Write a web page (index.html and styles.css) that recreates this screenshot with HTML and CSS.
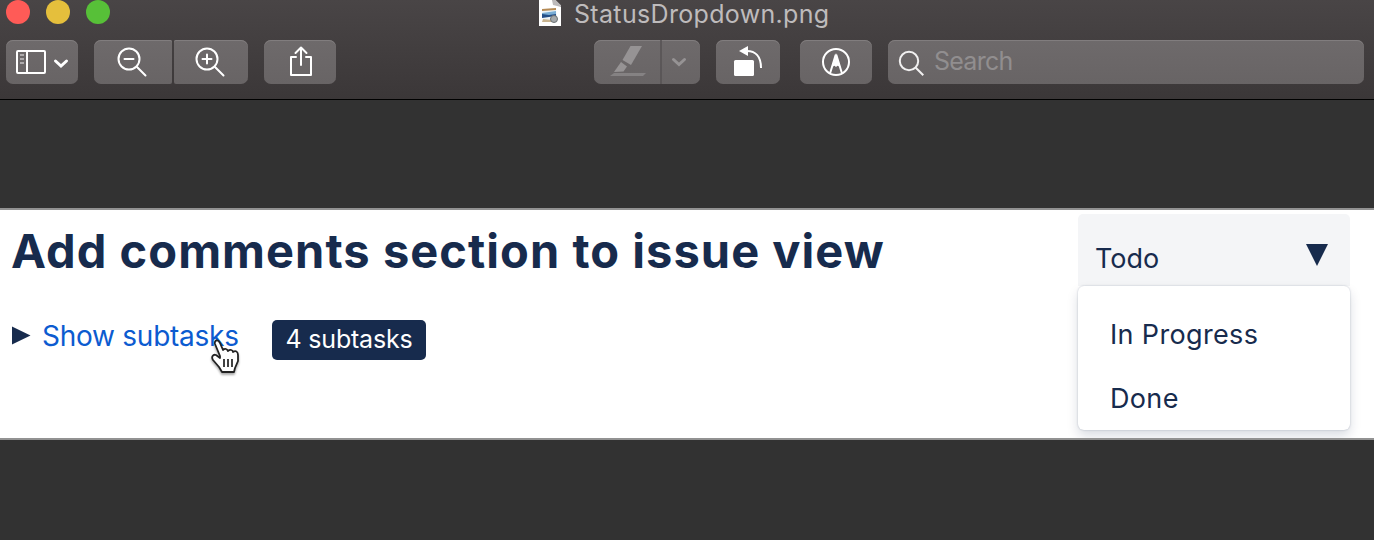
FILE: index.html
```html
<!DOCTYPE html>
<html lang="en">
<head>
<meta charset="utf-8">
<title>StatusDropdown.png</title>
<link rel="stylesheet" href="styles.css">
</head>
<body>
<div class="window">
  <header class="chrome">
    <div class="titlebar">
      <div class="lights"><span class="light red"></span><span class="light yellow"></span><span class="light green"></span></div>
      <div class="filename">
        <svg class="file-icon" width="24" height="28" viewBox="0 0 24 28">
          <path d="M1 0h13l9 7v19H1z" fill="#fff"/>
          <path d="M14 0l1 5 8 2V5l-5-5z" fill="#bcbabb"/>
          <path d="M18 0h5v5z" fill="#4a4647"/>
          <path d="M4 9l14-1 1 12-14 2z" fill="#edf3f6"/>
          <path d="M4 9l14-1v2L4 11z" fill="#b58a54"/>
          <path d="M4 13l14-2v4L4 17z" fill="#79add5"/>
          <path d="M4 14l7 1 7-1v2L4 18z" fill="#244e87"/>
          <path d="M5 19l9 1v2H4z" fill="#c9b48f"/>
          <circle cx="16" cy="19" r="3.500" fill="#a5a9ab" stroke="#6b7174"/>
        </svg>
        <span>StatusDropdown.png</span>
      </div>
    </div>
    <div class="toolbar">
      <button class="btn sidebar-btn">
        <svg width="72" height="44" viewBox="0 0 72 44" fill="none" stroke="#fff" stroke-width="2">
          <rect x="11" y="11" width="28" height="22" rx="1"/><path d="M21 11v22"/>
          <path d="M14 15h4M14 19h4M14 23h4" stroke="#c5c2c3" stroke-width="1.6"/>
          <path d="M49.500 21l5.500 5 5.500-5" stroke-width="3" stroke-linecap="round"/>
        </svg>
      </button>
      <div class="zoom-group">
        <button class="btn zoom-out">
          <svg width="78" height="44" viewBox="0 0 78 44" fill="none" stroke="#fff" stroke-width="2" stroke-linecap="round"><circle cx="35" cy="19" r="10.500"/><path d="M43 27l8.500 8.500M30.500 19h9"/></svg>
        </button>
        <button class="btn zoom-in">
          <svg width="74" height="44" viewBox="0 0 74 44" fill="none" stroke="#fff" stroke-width="2" stroke-linecap="round"><circle cx="33" cy="19" r="10.500"/><path d="M41 27l8.500 8.500M28.500 19h9M33 14.500v9"/></svg>
        </button>
      </div>
      <button class="btn share">
        <svg width="72" height="44" viewBox="0 0 72 44" fill="none" stroke="#fff" stroke-width="2" stroke-linecap="round" stroke-linejoin="round"><path d="M32 17h-5v18h20V17h-5M37 25V7.500M31.500 13L37 7.500l5.500 5.500"/></svg>
      </button>
      <button class="btn marker">
        <svg width="106" height="44" viewBox="0 0 106 44">
          <path d="M36.500 6H48L37 25l-8.500-5z" fill="#969394"/>
          <path d="M27 22l6 4.500-3.500 5L20 32z" fill="#969394"/>
          <path d="M20 33h32l-3 3H16z" fill="#858283"/>
          <path d="M67 0v44" stroke="#565253" stroke-width="1.500"/>
          <path d="M79.500 19.500l5.500 5 5.500-5" fill="none" stroke="#969394" stroke-width="3" stroke-linecap="round"/>
        </svg>
      </button>
      <button class="btn rotate">
        <svg width="64" height="44" viewBox="0 0 64 44"><rect x="18" y="20" width="20" height="16" rx="1.500" fill="#fff"/><path d="M23 11l9-5v10z" fill="#fff"/><path d="M31 11c8 0 14 5 14 17" fill="none" stroke="#fff" stroke-width="2"/></svg>
      </button>
      <button class="btn annotate">
        <svg width="72" height="44" viewBox="0 0 72 44" fill="none" stroke="#fff" stroke-width="2"><circle cx="36" cy="22" r="13"/><path d="M30 33.500l5.500-18h1l5.500 18"/><path d="M36 13L31.500 27l3-1.200L36 27l1.500-1.200 3 1.200z" fill="#fff" stroke="none"/></svg>
      </button>
      <div class="btn search">
        <svg width="46" height="44" viewBox="0 0 46 44" fill="none" stroke="#f1f0f0" stroke-width="2"><circle cx="21" cy="21" r="9.200"/><path d="M27.800 27.800l7.500 7.500"/></svg>
        <span>Search</span>
      </div>
    </div>
  </header>
  <main class="image">
    <section class="issue">
      <h1>Add comments section to issue view</h1>
      <div class="subtasks">
        <svg class="disclosure" width="20" height="20" viewBox="0 0 20 20"><path d="M1 0.500l18.500 9L1 18.500z" fill="#172b4d"/></svg>
        <span class="link">Show subtasks
          <svg class="cursor" width="36" height="40" viewBox="0 0 36 40"><path d="M12 21l-5-12c-1-4 3-5 5-1l3 7c2-2 4-1 5 1 2-2 5-1 5 1 3-2 5 0 5 3v6l-3 7-1 4H14l-3-5-6-7c-2-3 0-6 3-5l4 3z" fill="#fff" stroke="#222" stroke-width="1.800" stroke-linejoin="round"/><path d="M16 24v8M20 24v8M24 24v8" stroke="#222" stroke-width="1.700"/></svg>
        </span>
        <span class="tooltip">4 subtasks</span>
      </div>
    </section>
    <aside class="status">
      <div class="selected"><span>Todo</span><svg width="22" height="22" viewBox="0 0 22 22"><path d="M0 0h22L11 22z" fill="#172b4d"/></svg></div>
      <ul class="menu"><li>In Progress</li><li>Done</li></ul>
    </aside>
  </main>
</div>
</body>
</html>
```
FILE: styles.css
```css
* { box-sizing: border-box; }
body { margin: 0; font-family: Inter, sans-serif; background: #323232; }
.window { width: 1374px; height: 540px; overflow: hidden; }
.chrome { height: 100px; background: linear-gradient(#494546, #3b3738); border-bottom: 1px solid #000; }
.titlebar { display: grid; grid-template-columns: 538px 1fr; height: 40px; }
.lights { display: flex; gap: 16px; padding-left: 6px; }
.light { width: 24px; height: 24px; border-radius: 50%; }
.red { background: #ff5b57; }
.yellow { background: #e5bf3c; }
.green { background: #57c038; }
.filename { display: flex; gap: 12px; height: 28px; line-height: 28px; font-size: 25px; letter-spacing: .33px; color: #bebbbc; white-space: nowrap; }
.toolbar { display: flex; padding-left: 6px; }
.btn { display: flex; flex: none; height: 44px; padding: 0; border: 0; border-radius: 7px; background: linear-gradient(#6e6a6b, #686465); box-shadow: inset 0 1px #817d7e; overflow: hidden; }
.btn svg { display: block; flex: none; }
.zoom-group { display: flex; gap: 2px; margin: 0 16px; }
.zoom-out { border-radius: 7px 2px 2px 7px; }
.zoom-in { border-radius: 2px 7px 7px 2px; }
.marker { margin-left: 258px; }
.rotate { margin: 0 20px 0 16px; }
.search { width: 476px; margin-left: 16px; line-height: 43px; font-size: 25px; letter-spacing: -.75px; color: #918e8f; }
.image { display: flex; justify-content: space-between; height: 232px; margin-top: 108px; padding: 4px 24px 0 11px; background: #fff; border: solid #929292; border-width: 2px 0; overflow: hidden; color: #172b4d; }
.issue { padding-top: 8px; }
h1 { margin: 0; font-size: 47px; line-height: 58px; font-weight: 700; letter-spacing: 1.05px; white-space: nowrap; }
.subtasks { display: flex; margin-top: 33px; white-space: nowrap; font-size: 28px; line-height: 40px; }
.disclosure { margin: 13px 11px 0 0; }
.link { position: relative; width: 198px; margin-top: 5px; line-height: 36px; letter-spacing: -.25px; color: #0c5bd0; }
.cursor { position: absolute; left: 166px; top: 17px; filter: drop-shadow(0 2px 1px #0005); }
.tooltip { width: 154px; height: 40px; margin-top: 7px; margin-left: 32px; border-radius: 5px; background: #172b4d; color: #fff; font-size: 25px; line-height: 39px; letter-spacing: -.2px; text-align: center; }
.status { width: 272px; font-size: 27px; }
.selected { display: flex; justify-content: space-between; height: 72px; padding: 30px 22px 0 17px; border-radius: 5px 5px 0 0; background: #f4f5f7; line-height: 29px; }
.menu { height: 144px; margin: 0; padding: 17px 0 0 32px; list-style: none; border-radius: 6px; background: #fff; box-shadow: 0 6px 12px #091e4226, 0 0 2px #091e4240; letter-spacing: .35px; }
.menu li { height: 64px; line-height: 64px; }
```
